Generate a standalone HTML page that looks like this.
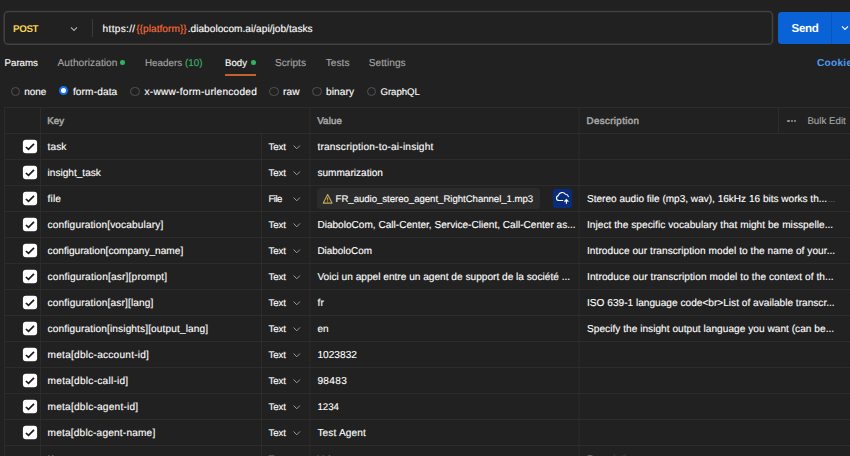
<!DOCTYPE html>
<html lang="en">
<head>
<meta charset="utf-8">
<title>Request</title>
<style>
html,body{margin:0;padding:0;}
body{width:850px;height:456px;overflow:hidden;background:#212121;position:relative;font-family:"Liberation Sans",sans-serif;font-size:12px;color:#fff;}
.t{position:absolute;white-space:nowrap;line-height:16px;font-size:9.8px;-webkit-text-stroke:0.12px currentColor;text-rendering:geometricPrecision;}
.a{position:absolute;}
.hl{position:absolute;height:1px;background:#2e2e2e;left:4px;right:0;}
.vl{position:absolute;width:1px;background:#2e2e2e;}
.cb{position:absolute;left:23px;width:14px;height:13.5px;border-radius:3px;background:#fff;}
.cb svg{position:absolute;left:0;top:0;}
.rd{position:absolute;width:9.5px;height:9.5px;border-radius:50%;border:1px solid #525252;box-sizing:border-box;top:86.6px;}
.chev{position:absolute;}
</style>
</head>
<body>
<!-- url bar -->
<svg class="a" style="left:0;top:0" width="780" height="50" viewBox="0 0 780 50"><rect x="4.2" y="11.6" width="768.3" height="32.6" rx="4" ry="4" fill="none" stroke="#424242" stroke-width="1.5"/></svg>
<div class="vl" style="left:92.3px;top:18.5px;height:18.6px;background:#3a3a3a;"></div>
<svg class="a" style="left:69.4px;top:23.5px" width="10" height="10" viewBox="0 0 10 10"><path d="M2 3.4 L5 6.5 L8 3.4" fill="none" stroke="#b0b0b0" stroke-width="1.1"/></svg>
<!-- send -->
<div class="a" style="left:778px;top:12px;width:80px;height:31.9px;border-radius:3.5px;background:#0a63d6;"></div>
<div class="vl" style="left:831px;top:12px;height:32px;background:#0a55ba;"></div>
<svg class="a" style="left:840px;top:23.1px" width="10" height="10" viewBox="0 0 10 10"><path d="M2 3.4 L5 6.5 L8 3.4" fill="none" stroke="#ffffff" stroke-width="1.1"/></svg>
<!-- tab indicators -->
<div class="a" style="left:122.75px;top:62.5px;width:4.6px;height:4.6px;margin:-2.3px 0 0 -2.3px;border-radius:50%;background:#2db55d;"></div>
<div class="a" style="left:253.5px;top:62.5px;width:4.6px;height:4.6px;margin:-2.3px 0 0 -2.3px;border-radius:50%;background:#2db55d;"></div>
<div class="a" style="left:224.5px;top:74px;width:31.5px;height:2px;background:#c5602f;"></div>
<!-- radios -->
<div class="rd" style="left:10.5px"></div>
<div class="rd" style="left:59.3px;top:86px;width:9px;height:9px;border:2.5px solid #1272f0;background:#fff;"></div>
<div class="rd" style="left:130px"></div>
<div class="rd" style="left:269px"></div>
<div class="rd" style="left:312px"></div>
<div class="rd" style="left:366.5px"></div>
<!-- table -->
<div id="grid"><svg class="a" style="left:0;top:0" width="850" height="456" viewBox="0 0 850 456"><rect x="4" y="107" width="846" height="1" fill="#2c2c2c"/><rect x="4" y="133" width="846" height="1" fill="#2c2c2c"/><rect x="4" y="159" width="846" height="1" fill="#2c2c2c"/><rect x="4" y="185" width="846" height="1" fill="#2c2c2c"/><rect x="4" y="211" width="846" height="1" fill="#2c2c2c"/><rect x="4" y="237" width="846" height="1" fill="#2c2c2c"/><rect x="4" y="263" width="846" height="1" fill="#2c2c2c"/><rect x="4" y="289" width="846" height="1" fill="#2c2c2c"/><rect x="4" y="315" width="846" height="1" fill="#2c2c2c"/><rect x="4" y="341" width="846" height="1" fill="#2c2c2c"/><rect x="4" y="367" width="846" height="1" fill="#2c2c2c"/><rect x="4" y="393" width="846" height="1" fill="#2c2c2c"/><rect x="4" y="419" width="846" height="1" fill="#2c2c2c"/><rect x="4" y="445" width="846" height="1" fill="#2c2c2c"/><rect x="4" y="107" width="1" height="349" fill="#2c2c2c"/><rect x="40" y="107" width="1" height="349" fill="#2c2c2c"/><rect x="261" y="133" width="1" height="323" fill="#2c2c2c"/><rect x="309.3" y="107" width="1" height="349" fill="#2c2c2c"/><rect x="578.5" y="107" width="1" height="349" fill="#2c2c2c"/><rect x="778" y="107" width="1" height="26" fill="#2c2c2c"/></svg>
<svg class="a" style="left:22px;top:139px" width="16" height="16" viewBox="0 0 16 16"><rect x="0.9" y="0.8" width="14.2" height="13.5" rx="3" ry="3" fill="#ffffff"/><path d="M3.9 8.0 L6.5 10.4 L12.0 4.9" fill="none" stroke="#1a1a1a" stroke-width="1.7"/></svg>
<svg class="a" style="left:292px;top:141.5px" width="10" height="10" viewBox="0 0 10 10"><path d="M1.6 3.5 L4.75 6.8 L7.9 3.5" fill="none" stroke="#9a9a9a" stroke-width="1"/></svg>
<svg class="a" style="left:22px;top:165px" width="16" height="16" viewBox="0 0 16 16"><rect x="0.9" y="0.8" width="14.2" height="13.5" rx="3" ry="3" fill="#ffffff"/><path d="M3.9 8.0 L6.5 10.4 L12.0 4.9" fill="none" stroke="#1a1a1a" stroke-width="1.7"/></svg>
<svg class="a" style="left:292px;top:167.5px" width="10" height="10" viewBox="0 0 10 10"><path d="M1.6 3.5 L4.75 6.8 L7.9 3.5" fill="none" stroke="#9a9a9a" stroke-width="1"/></svg>
<svg class="a" style="left:22px;top:191px" width="16" height="16" viewBox="0 0 16 16"><rect x="0.9" y="0.8" width="14.2" height="13.5" rx="3" ry="3" fill="#ffffff"/><path d="M3.9 8.0 L6.5 10.4 L12.0 4.9" fill="none" stroke="#1a1a1a" stroke-width="1.7"/></svg>
<svg class="a" style="left:292px;top:193.5px" width="10" height="10" viewBox="0 0 10 10"><path d="M1.6 3.5 L4.75 6.8 L7.9 3.5" fill="none" stroke="#9a9a9a" stroke-width="1"/></svg>
<svg class="a" style="left:22px;top:217px" width="16" height="16" viewBox="0 0 16 16"><rect x="0.9" y="0.8" width="14.2" height="13.5" rx="3" ry="3" fill="#ffffff"/><path d="M3.9 8.0 L6.5 10.4 L12.0 4.9" fill="none" stroke="#1a1a1a" stroke-width="1.7"/></svg>
<svg class="a" style="left:292px;top:219.5px" width="10" height="10" viewBox="0 0 10 10"><path d="M1.6 3.5 L4.75 6.8 L7.9 3.5" fill="none" stroke="#9a9a9a" stroke-width="1"/></svg>
<svg class="a" style="left:22px;top:243px" width="16" height="16" viewBox="0 0 16 16"><rect x="0.9" y="0.8" width="14.2" height="13.5" rx="3" ry="3" fill="#ffffff"/><path d="M3.9 8.0 L6.5 10.4 L12.0 4.9" fill="none" stroke="#1a1a1a" stroke-width="1.7"/></svg>
<svg class="a" style="left:292px;top:245.5px" width="10" height="10" viewBox="0 0 10 10"><path d="M1.6 3.5 L4.75 6.8 L7.9 3.5" fill="none" stroke="#9a9a9a" stroke-width="1"/></svg>
<svg class="a" style="left:22px;top:269px" width="16" height="16" viewBox="0 0 16 16"><rect x="0.9" y="0.8" width="14.2" height="13.5" rx="3" ry="3" fill="#ffffff"/><path d="M3.9 8.0 L6.5 10.4 L12.0 4.9" fill="none" stroke="#1a1a1a" stroke-width="1.7"/></svg>
<svg class="a" style="left:292px;top:271.5px" width="10" height="10" viewBox="0 0 10 10"><path d="M1.6 3.5 L4.75 6.8 L7.9 3.5" fill="none" stroke="#9a9a9a" stroke-width="1"/></svg>
<svg class="a" style="left:22px;top:295px" width="16" height="16" viewBox="0 0 16 16"><rect x="0.9" y="0.8" width="14.2" height="13.5" rx="3" ry="3" fill="#ffffff"/><path d="M3.9 8.0 L6.5 10.4 L12.0 4.9" fill="none" stroke="#1a1a1a" stroke-width="1.7"/></svg>
<svg class="a" style="left:292px;top:297.5px" width="10" height="10" viewBox="0 0 10 10"><path d="M1.6 3.5 L4.75 6.8 L7.9 3.5" fill="none" stroke="#9a9a9a" stroke-width="1"/></svg>
<svg class="a" style="left:22px;top:321px" width="16" height="16" viewBox="0 0 16 16"><rect x="0.9" y="0.8" width="14.2" height="13.5" rx="3" ry="3" fill="#ffffff"/><path d="M3.9 8.0 L6.5 10.4 L12.0 4.9" fill="none" stroke="#1a1a1a" stroke-width="1.7"/></svg>
<svg class="a" style="left:292px;top:323.5px" width="10" height="10" viewBox="0 0 10 10"><path d="M1.6 3.5 L4.75 6.8 L7.9 3.5" fill="none" stroke="#9a9a9a" stroke-width="1"/></svg>
<svg class="a" style="left:22px;top:347px" width="16" height="16" viewBox="0 0 16 16"><rect x="0.9" y="0.8" width="14.2" height="13.5" rx="3" ry="3" fill="#ffffff"/><path d="M3.9 8.0 L6.5 10.4 L12.0 4.9" fill="none" stroke="#1a1a1a" stroke-width="1.7"/></svg>
<svg class="a" style="left:292px;top:349.5px" width="10" height="10" viewBox="0 0 10 10"><path d="M1.6 3.5 L4.75 6.8 L7.9 3.5" fill="none" stroke="#9a9a9a" stroke-width="1"/></svg>
<svg class="a" style="left:22px;top:373px" width="16" height="16" viewBox="0 0 16 16"><rect x="0.9" y="0.8" width="14.2" height="13.5" rx="3" ry="3" fill="#ffffff"/><path d="M3.9 8.0 L6.5 10.4 L12.0 4.9" fill="none" stroke="#1a1a1a" stroke-width="1.7"/></svg>
<svg class="a" style="left:292px;top:375.5px" width="10" height="10" viewBox="0 0 10 10"><path d="M1.6 3.5 L4.75 6.8 L7.9 3.5" fill="none" stroke="#9a9a9a" stroke-width="1"/></svg>
<svg class="a" style="left:22px;top:399px" width="16" height="16" viewBox="0 0 16 16"><rect x="0.9" y="0.8" width="14.2" height="13.5" rx="3" ry="3" fill="#ffffff"/><path d="M3.9 8.0 L6.5 10.4 L12.0 4.9" fill="none" stroke="#1a1a1a" stroke-width="1.7"/></svg>
<svg class="a" style="left:292px;top:401.5px" width="10" height="10" viewBox="0 0 10 10"><path d="M1.6 3.5 L4.75 6.8 L7.9 3.5" fill="none" stroke="#9a9a9a" stroke-width="1"/></svg>
<svg class="a" style="left:22px;top:425px" width="16" height="16" viewBox="0 0 16 16"><rect x="0.9" y="0.8" width="14.2" height="13.5" rx="3" ry="3" fill="#ffffff"/><path d="M3.9 8.0 L6.5 10.4 L12.0 4.9" fill="none" stroke="#1a1a1a" stroke-width="1.7"/></svg>
<svg class="a" style="left:292px;top:427.5px" width="10" height="10" viewBox="0 0 10 10"><path d="M1.6 3.5 L4.75 6.8 L7.9 3.5" fill="none" stroke="#9a9a9a" stroke-width="1"/></svg>
<svg class="a" style="left:292px;top:453.5px" width="10" height="10" viewBox="0 0 10 10"><path d="M1.6 3.5 L4.75 6.8 L7.9 3.5" fill="none" stroke="#4a4a4a" stroke-width="1"/></svg>
<div class="a" style="left:787.40px;top:119.6px;width:2.6px;height:2.6px;border-radius:50%;background:#979797"></div>
<div class="a" style="left:790.55px;top:119.6px;width:2.6px;height:2.6px;border-radius:50%;background:#979797"></div>
<div class="a" style="left:793.70px;top:119.6px;width:2.6px;height:2.6px;border-radius:50%;background:#979797"></div>
<div class="a" style="left:317px;top:188px;width:223px;height:21px;border-radius:4px;background:#2b2b2b"></div>
<svg class="a" style="left:322px;top:193px" width="11" height="11" viewBox="0 0 11 11"><path d="M5.65 1.5 L10 10.1 L1.3 10.1 Z" fill="none" stroke="#c4ab58" stroke-width="1.1" stroke-linejoin="round"/><path d="M5.65 4.5 V7.6 M5.65 8.3 V9.1" stroke="#c4ab58" stroke-width="1"/></svg>
<div class="a" style="left:553px;top:189px;width:19px;height:19px;border-radius:3px;background:#092b7d"></div>
<svg class="a" style="left:553px;top:189px" width="19" height="19" viewBox="0 0 19 19"><path d="M9.8 11.5 H6 A2.5 2.5 0 0 1 5.3 6.6 A4 4 0 0 1 12.5 5.3 A3.2 3.2 0 0 1 15.4 7.7" fill="none" stroke="#ffffff" stroke-width="1.1" stroke-linecap="round"/><path d="M13.4 14.8 V10.8 M11.4 12.6 L13.4 10.6 L15.4 12.6" fill="none" stroke="#ffffff" stroke-width="1.2"/></svg></div>
<span class="t" style="left:13.0px;top:22.0px;color:#f5d04f;font-weight:700;letter-spacing:-0.362px;-webkit-text-stroke:0;">POST</span>
<span class="t" style="left:102.6px;top:22.1px;color:#ffffff;font-size:10.14px;letter-spacing:0.309px;">https://</span>
<span class="t" style="left:136.2px;top:22.1px;color:#ff6c37;font-size:10.14px;letter-spacing:0.038px;">{{platform}}</span>
<span class="t" style="left:187.7px;top:22.1px;color:#ffffff;font-size:10.14px;letter-spacing:0.020px;">.diabolocom.ai/api/job/tasks</span>
<span class="t" style="left:791.5px;top:21.2px;color:#ffffff;font-weight:700;font-size:11.6px;letter-spacing:-0.353px;-webkit-text-stroke:0;">Send</span>
<span class="t" style="left:4.5px;top:56.1px;color:#ffffff;font-size:9.72px;">Params</span>
<span class="t" style="left:57.5px;top:56.1px;color:#a6a6a6;font-size:10.14px;letter-spacing:0.068px;">Authorization</span>
<span class="t" style="left:145.0px;top:56.1px;color:#a6a6a6;font-size:9.85px;">Headers <span style="color:#3fb56b">(10)</span></span>
<span class="t" style="left:225.0px;top:56.1px;color:#ffffff;font-size:9.65px;">Body</span>
<span class="t" style="left:275.0px;top:56.1px;color:#a6a6a6;font-size:10.14px;">Scripts</span>
<span class="t" style="left:325.7px;top:56.1px;color:#a6a6a6;font-size:10.14px;letter-spacing:0.031px;">Tests</span>
<span class="t" style="left:368.7px;top:56.1px;color:#a6a6a6;font-size:10.14px;letter-spacing:0.051px;">Settings</span>
<span class="t" style="left:817.0px;top:56.1px;color:#4d9cf5;font-weight:700;font-size:10.14px;letter-spacing:0.257px;-webkit-text-stroke:0;">Cookies</span>
<span class="t" style="left:24.2px;top:85.0px;color:#ffffff;font-size:9.98px;">none</span>
<span class="t" style="left:72.9px;top:85.0px;color:#ffffff;font-size:10.14px;letter-spacing:0.124px;">form-data</span>
<span class="t" style="left:144.5px;top:85.0px;color:#ffffff;font-size:10.14px;letter-spacing:0.244px;">x-www-form-urlencoded</span>
<span class="t" style="left:283.0px;top:85.0px;color:#ffffff;font-size:10.14px;letter-spacing:0.075px;">raw</span>
<span class="t" style="left:326.0px;top:85.0px;color:#ffffff;font-size:10.14px;letter-spacing:0.076px;">binary</span>
<span class="t" style="left:380.5px;top:85.0px;color:#ffffff;font-size:9.65px;letter-spacing:-0.035px;">GraphQL</span>
<span class="t" style="left:47.2px;top:113.8px;color:#a6a6a6;font-size:9.7px;letter-spacing:0.098px;-webkit-text-stroke:0.5px currentColor;">Key</span>
<span class="t" style="left:317.2px;top:113.8px;color:#a6a6a6;font-size:9.7px;letter-spacing:0.184px;-webkit-text-stroke:0.5px currentColor;">Value</span>
<span class="t" style="left:586.5px;top:113.8px;color:#a6a6a6;font-size:9.7px;letter-spacing:0.403px;-webkit-text-stroke:0.5px currentColor;">Description</span>
<span class="t" style="left:807.4px;top:113.5px;color:#a6a6a6;font-size:9.73px;">Bulk Edit</span>
<span class="t" style="left:47.6px;top:139.7px;color:#ffffff;font-size:10.14px;letter-spacing:0.067px;">task</span>
<span class="t" style="left:268.5px;top:139.7px;color:#ffffff;font-size:9.65px;letter-spacing:-0.066px;">Text</span>
<span class="t" style="left:317.4px;top:139.7px;color:#ffffff;font-size:10.14px;letter-spacing:0.195px;">transcription-to-ai-insight</span>
<span class="t" style="left:47.6px;top:165.7px;color:#ffffff;font-size:10.09px;">insight_task</span>
<span class="t" style="left:268.5px;top:165.7px;color:#ffffff;font-size:9.65px;letter-spacing:-0.066px;">Text</span>
<span class="t" style="left:317.4px;top:165.7px;color:#ffffff;font-size:10.09px;">summarization</span>
<span class="t" style="left:47.6px;top:191.7px;color:#ffffff;font-size:10.14px;letter-spacing:0.143px;">file</span>
<span class="t" style="left:268.5px;top:191.7px;color:#ffffff;font-size:9.65px;letter-spacing:-0.553px;">File</span>
<span class="t" style="left:587.0px;top:191.7px;color:#ffffff;font-size:10.05px;">Stereo audio file (mp3, wav), 16kHz 16 bits works th...</span>
<span class="t" style="left:47.6px;top:217.7px;color:#ffffff;font-size:10.14px;letter-spacing:0.128px;">configuration[vocabulary]</span>
<span class="t" style="left:268.5px;top:217.7px;color:#ffffff;font-size:9.65px;letter-spacing:-0.066px;">Text</span>
<span class="t" style="left:317.4px;top:217.7px;color:#ffffff;font-size:10.08px;">DiaboloCom, Call-Center, Service-Client, Call-Center as...</span>
<span class="t" style="left:587.0px;top:217.7px;color:#ffffff;font-size:10.14px;letter-spacing:0.034px;">Inject the specific vocabulary that might be misspelle...</span>
<span class="t" style="left:47.6px;top:243.7px;color:#ffffff;font-size:10.14px;">configuration[company_name]</span>
<span class="t" style="left:268.5px;top:243.7px;color:#ffffff;font-size:9.65px;letter-spacing:-0.066px;">Text</span>
<span class="t" style="left:317.4px;top:243.7px;color:#ffffff;font-size:9.92px;">DiaboloCom</span>
<span class="t" style="left:587.0px;top:243.7px;color:#ffffff;font-size:10.14px;letter-spacing:0.040px;">Introduce our transcription model to the name of your...</span>
<span class="t" style="left:47.6px;top:269.7px;color:#ffffff;font-size:10.14px;letter-spacing:0.185px;">configuration[asr][prompt]</span>
<span class="t" style="left:268.5px;top:269.7px;color:#ffffff;font-size:9.65px;letter-spacing:-0.066px;">Text</span>
<span class="t" style="left:317.4px;top:269.7px;color:#ffffff;font-size:10.14px;">Voici un appel entre un agent de support de la société ...</span>
<span class="t" style="left:587.0px;top:269.7px;color:#ffffff;font-size:10.14px;letter-spacing:0.073px;">Introduce our transcription model to the context of th...</span>
<span class="t" style="left:47.6px;top:295.7px;color:#ffffff;font-size:10.14px;letter-spacing:0.148px;">configuration[asr][lang]</span>
<span class="t" style="left:268.5px;top:295.7px;color:#ffffff;font-size:9.65px;letter-spacing:-0.066px;">Text</span>
<span class="t" style="left:317.4px;top:295.7px;color:#ffffff;font-size:10.14px;letter-spacing:0.406px;">fr</span>
<span class="t" style="left:587.0px;top:295.7px;color:#ffffff;font-size:10.14px;">ISO 639-1 language code&lt;br&gt;List of available transcr...</span>
<span class="t" style="left:47.6px;top:321.7px;color:#ffffff;font-size:10.14px;letter-spacing:0.114px;">configuration[insights][output_lang]</span>
<span class="t" style="left:268.5px;top:321.7px;color:#ffffff;font-size:9.65px;letter-spacing:-0.066px;">Text</span>
<span class="t" style="left:317.4px;top:321.7px;color:#ffffff;font-size:9.97px;">en</span>
<span class="t" style="left:587.0px;top:321.7px;color:#ffffff;font-size:10.14px;letter-spacing:0.021px;">Specify the insight output language you want (can be...</span>
<span class="t" style="left:47.6px;top:347.7px;color:#ffffff;font-size:10.14px;letter-spacing:0.227px;">meta[dblc-account-id]</span>
<span class="t" style="left:268.5px;top:347.7px;color:#ffffff;font-size:9.65px;letter-spacing:-0.066px;">Text</span>
<span class="t" style="left:317.4px;top:347.7px;color:#ffffff;font-size:10.14px;letter-spacing:0.021px;">1023832</span>
<span class="t" style="left:47.6px;top:373.7px;color:#ffffff;font-size:10.14px;letter-spacing:0.239px;">meta[dblc-call-id]</span>
<span class="t" style="left:268.5px;top:373.7px;color:#ffffff;font-size:9.65px;letter-spacing:-0.066px;">Text</span>
<span class="t" style="left:317.4px;top:373.7px;color:#ffffff;font-size:10.14px;letter-spacing:0.349px;">98483</span>
<span class="t" style="left:47.6px;top:399.7px;color:#ffffff;font-size:10.14px;letter-spacing:0.216px;">meta[dblc-agent-id]</span>
<span class="t" style="left:268.5px;top:399.7px;color:#ffffff;font-size:9.65px;letter-spacing:-0.066px;">Text</span>
<span class="t" style="left:317.4px;top:399.7px;color:#ffffff;font-size:9.71px;">1234</span>
<span class="t" style="left:47.6px;top:425.7px;color:#ffffff;font-size:10.14px;letter-spacing:0.176px;">meta[dblc-agent-name]</span>
<span class="t" style="left:268.5px;top:425.7px;color:#ffffff;font-size:9.65px;letter-spacing:-0.066px;">Text</span>
<span class="t" style="left:317.4px;top:425.7px;color:#ffffff;font-size:10.14px;letter-spacing:0.137px;">Test Agent</span>
<span class="t" style="left:827.8px;top:191.7px;color:#5c5c5c;font-size:9.65px;letter-spacing:-0.325px;">...</span>
<span class="t" style="left:335.6px;top:191.7px;color:#ffffff;font-size:9.65px;letter-spacing:-0.038px;">FR_audio_stereo_agent_RightChannel_1.mp3</span>
<span class="t" style="left:47.6px;top:451.7px;color:#6b6b6b;font-size:10.1px;">Key</span>
<span class="t" style="left:268.6px;top:451.7px;color:#6b6b6b;font-size:9.65px;letter-spacing:-0.033px;">Text</span>
<span class="t" style="left:317.4px;top:451.7px;color:#6b6b6b;font-size:9.65px;letter-spacing:-0.045px;">Value</span>
<span class="t" style="left:587.0px;top:451.7px;color:#6b6b6b;font-size:10.1px;">Description</span>
</body>
</html>
